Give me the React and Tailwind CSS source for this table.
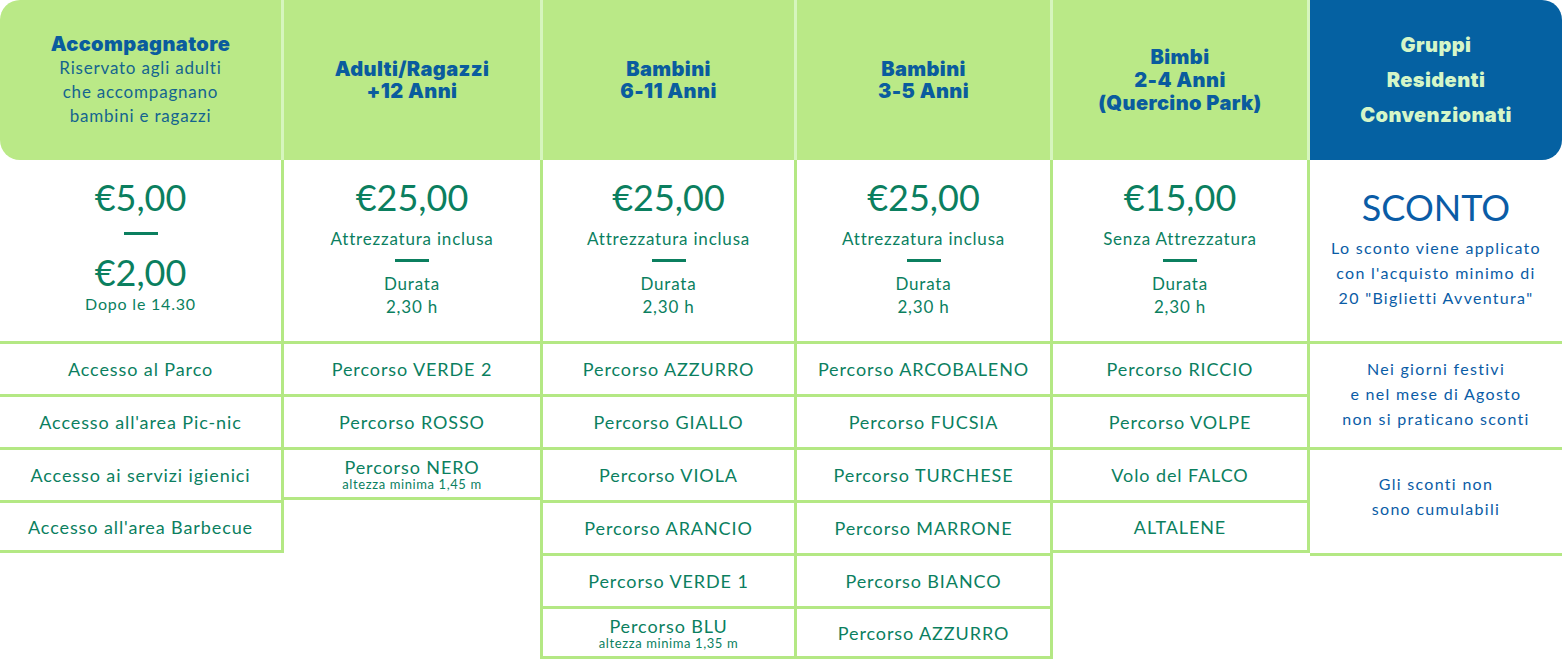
import React from 'react';

const body = "font-['Lato','Noto_Sans',sans-serif]";
const title = "font-['Inter','Roboto',sans-serif] font-black tracking-[0.4px]";

function Dash() {
  return <div className="mx-auto h-[3px] w-[34px] bg-[#0b7f5f]" />;
}

function Row({ children, sub, last }) {
  return (
    <div
      className={
        'flex h-[53px] flex-col items-center justify-center border-t-[3px] border-[#b4e884] text-[18px] leading-[20px] text-[#0b7f5f] ' +
        (last ? 'border-b-[3px]' : '')
      }
    >
      <span className="tracking-[0.9px]">{children}</span>
      {sub && <span className="text-[13px] leading-[14px] tracking-[0.6px]">{sub}</span>}
    </div>
  );
}

function Price({ amount, note }) {
  return (
    <div className="flex h-[181px] flex-col items-center pt-[17px] text-[#0b7f5f]">
      <div className="text-[36px] leading-[40px]">{amount}</div>
      <div className="mt-[11px] text-[17px] leading-[22px] tracking-[0.8px]">{note}</div>
      <div className="mt-[9px]">
        <Dash />
      </div>
      <div className="mt-[10px] text-[17px] leading-[23px] tracking-[0.8px]">Durata</div>
      <div className="text-[17px] leading-[23px] tracking-[0.8px]">2,30 h</div>
    </div>
  );
}

function Head({ lines, extra }) {
  return (
    <div
      className={
        'flex h-[160px] flex-col items-center justify-center bg-[#bae987] text-center text-[20px] leading-[22px] text-[#0a5c9e] ' +
        title +
        ' ' +
        (extra || '')
      }
    >
      {lines.map((l) => (
        <div key={l}>{l}</div>
      ))}
    </div>
  );
}

const paths = {
  adulti: ['Percorso VERDE 2', 'Percorso ROSSO'],
  b611: ['Percorso AZZURRO', 'Percorso GIALLO', 'Percorso VIOLA', 'Percorso ARANCIO', 'Percorso VERDE 1'],
  b35: ['Percorso ARCOBALENO', 'Percorso FUCSIA', 'Percorso TURCHESE', 'Percorso MARRONE', 'Percorso BIANCO', 'Percorso AZZURRO'],
  bimbi: ['Percorso RICCIO', 'Percorso VOLPE', 'Volo del FALCO', 'ALTALENE'],
};

export default function App() {
  return (
    <div className={'flex h-[661px] w-[1562px] items-start overflow-hidden bg-white ' + body}>
      {/* Accompagnatore */}
      <div className="flex w-[284px] flex-col">
        <div className="flex h-[160px] flex-col items-center justify-center rounded-l-[20px] border-r-[3px] border-[#d6f5bd] bg-[#bae987] text-center">
          <div className={'text-[20px] leading-[24px] text-[#0a5c9e] ' + title}>Accompagnatore</div>
          <div className="text-[17px] leading-[24px] tracking-[0.8px] text-[#14648f]">
            Riservato agli adulti
            <br />
            che accompagnano
            <br />
            bambini e ragazzi
          </div>
        </div>
        <div className="border-r-[3px] border-[#b4e884]">
          <div className="flex h-[181px] flex-col items-center pt-[17px] text-[#0b7f5f]">
            <div className="text-[36px] leading-[40px]">€5,00</div>
            <div className="mt-[15px]">
              <Dash />
            </div>
            <div className="mt-[17px] text-[36px] leading-[40px]">€2,00</div>
            <div className="mt-[2px] text-[16px] leading-[20px] tracking-[0.8px]">Dopo le 14.30</div>
          </div>
          <Row>Accesso al Parco</Row>
          <Row>Accesso all'area Pic-nic</Row>
          <Row>Accesso ai servizi igienici</Row>
          <Row last>Accesso all'area Barbecue</Row>
        </div>
      </div>

      {/* Adulti */}
      <div className="flex w-[256px] flex-col">
        <Head lines={['Adulti/Ragazzi', '+12 Anni']} />
        <Price amount="€25,00" note="Attrezzatura inclusa" />
        {paths.adulti.map((p) => (
          <Row key={p}>{p}</Row>
        ))}
        <Row sub="altezza minima 1,45 m" last>
          Percorso NERO
        </Row>
      </div>

      {/* Bambini 6-11 */}
      <div className="flex w-[257px] flex-col">
        <Head lines={['Bambini', '6-11 Anni']} extra="border-x-[3px] border-[#d6f5bd]" />
        <div className="border-x-[3px] border-[#b4e884]">
          <Price amount="€25,00" note="Attrezzatura inclusa" />
          {paths.b611.map((p) => (
            <Row key={p}>{p}</Row>
          ))}
          <Row sub="altezza minima 1,35 m" last>
            Percorso BLU
          </Row>
        </div>
      </div>

      {/* Bambini 3-5 */}
      <div className="flex w-[256px] flex-col">
        <Head lines={['Bambini', '3-5 Anni']} extra="border-r-[3px] border-[#d6f5bd]" />
        <div className="border-r-[3px] border-[#b4e884]">
          <Price amount="€25,00" note="Attrezzatura inclusa" />
          {paths.b35.map((p, i) => (
            <Row key={i} last={i === paths.b35.length - 1}>
              {p}
            </Row>
          ))}
        </div>
      </div>

      {/* Bimbi */}
      <div className="flex w-[257px] flex-col">
        <Head lines={['Bimbi', '2-4 Anni', '(Quercino Park)']} extra="border-r-[3px] border-[#d6f5bd] leading-[23px]" />
        <div className="border-r-[3px] border-[#b4e884]">
          <Price amount="€15,00" note="Senza Attrezzatura" />
          {paths.bimbi.map((p, i) => (
            <Row key={p} last={i === paths.bimbi.length - 1}>
              {p}
            </Row>
          ))}
        </div>
      </div>

      {/* Gruppi */}
      <div className="flex w-[252px] flex-col">
        <div
          className={
            'flex h-[160px] flex-col items-center justify-center rounded-r-[20px] bg-[#0561a2] text-center text-[20px] leading-[35px] text-[#d5f6c8] ' +
            title
          }
        >
          <div>Gruppi</div>
          <div>Residenti</div>
          <div>Convenzionati</div>
        </div>
        <div className="flex h-[181px] flex-col items-center pt-[27px] text-center text-[#0a5ca6]">
          <div className="text-[36px] leading-[40px]">SCONTO</div>
          <div className="mt-[8px] text-[16px] leading-[25px] tracking-[1.3px]">
            Lo sconto viene applicato
            <br />
            con l'acquisto minimo di
            <br />
            20 "Biglietti Avventura"
          </div>
        </div>
        <div className="flex h-[106px] items-center justify-center border-t-[3px] border-[#b4e884] pb-[4px] text-center text-[16px] leading-[25px] tracking-[1.3px] text-[#0a5ca6]">
          <div>
            Nei giorni festivi
            <br />
            e nel mese di Agosto
            <br />
            non si praticano sconti
          </div>
        </div>
        <div className="flex h-[109px] items-center justify-center border-y-[3px] border-[#b4e884] pb-[12px] text-center text-[16px] leading-[25px] tracking-[1.3px] text-[#0a5ca6]">
          <div>
            Gli sconti non
            <br />
            sono cumulabili
          </div>
        </div>
      </div>
    </div>
  );
}
